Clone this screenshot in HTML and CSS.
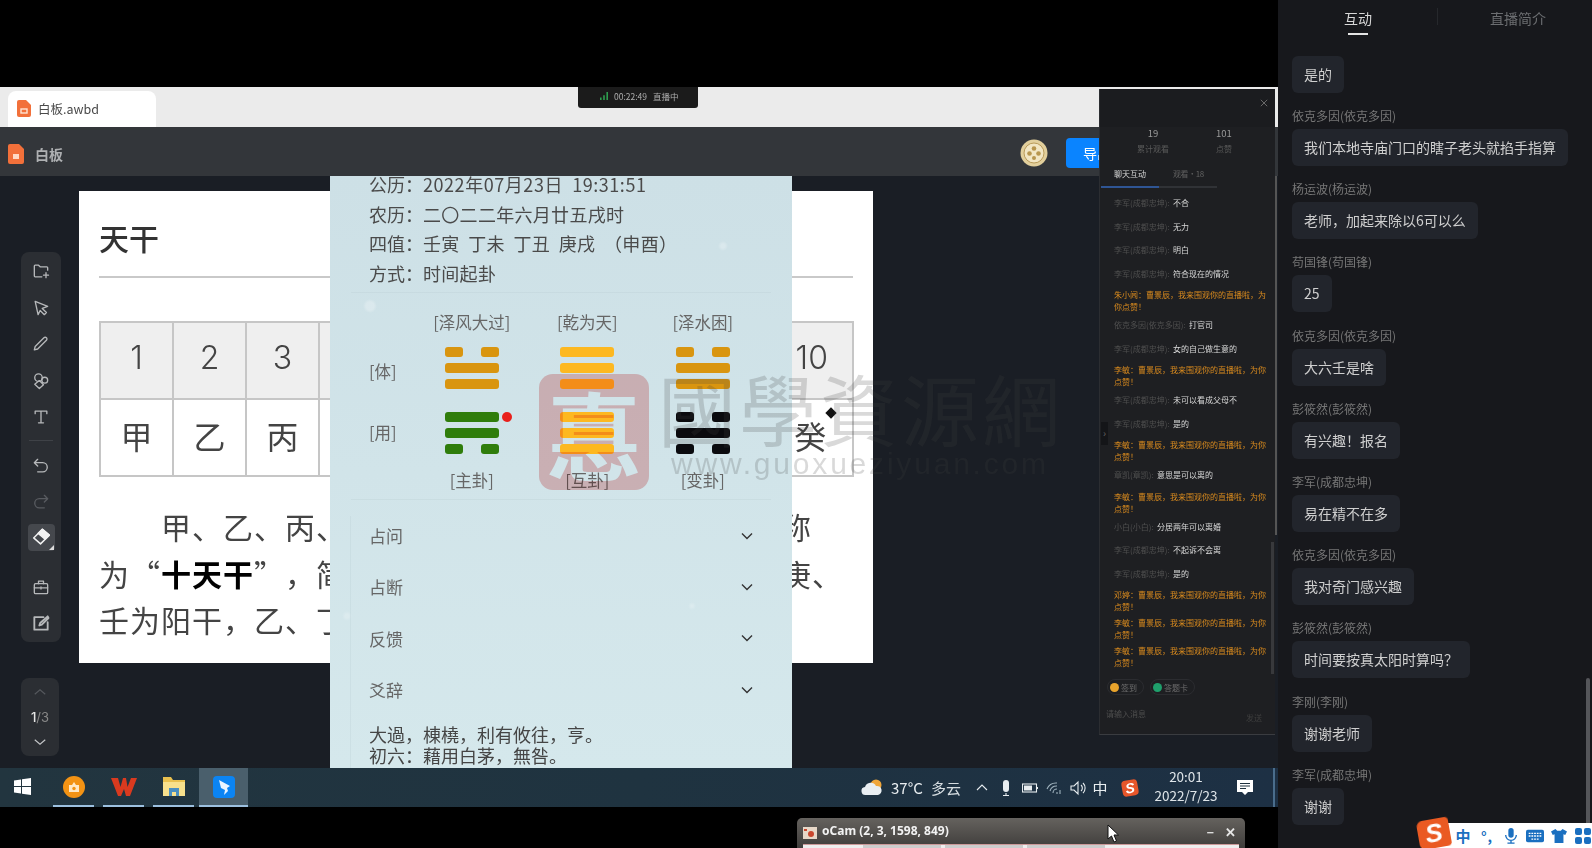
FILE: index.html
```html
<!DOCTYPE html>
<html lang="zh-CN">
<head>
<meta charset="utf-8">
<title>白板.awbd</title>
<link rel="stylesheet" href="styles.css">
</head>
<body>
<div class="screen">
  <main class="stage">
    <div class="stage-top"></div>
    <div class="tabstrip">
      <div class="file-tab">
        <svg class="doc-icon" viewBox="0 0 14 17"><path fill="#f2703a" d="M2 0h7l5 5v10a2 2 0 0 1-2 2H2a2 2 0 0 1-2-2V2a2 2 0 0 1 2-2z"/><rect x="4" y="9" width="6" height="4" fill="none" stroke="#ffe3d2" stroke-width="1.4"/></svg>
        <span>白板.awbd</span>
      </div>
    </div>
    <header class="apphead">
      <svg class="doc-icon-lg" viewBox="0 0 16 20"><path fill="#f2703a" d="M2 0h9l5 5v13a2 2 0 0 1-2 2H2a2 2 0 0 1-2-2V2a2 2 0 0 1 2-2z"/><rect x="5" y="10" width="6" height="5" fill="#ffd9c4"/></svg>
      <span class="app-name">白板</span>
      <svg class="avatar" viewBox="0 0 28 28"><circle cx="14" cy="14" r="13.5" fill="#e2cf9c"/><circle cx="14" cy="14" r="10" fill="#f2e6c4" stroke="#b99b5a"/><circle cx="14" cy="9.500" r="2.300" fill="#b8964e"/><circle cx="9.500" cy="14.500" r="2.300" fill="#b8964e"/><circle cx="18.500" cy="14.500" r="2.300" fill="#b8964e"/><circle cx="14" cy="19" r="2" fill="#b8964e"/></svg>
      <button class="export">导出</button>
    </header>
    <div class="workspace">
      <aside class="rail">
        <nav class="tools">
          <svg class="tool" viewBox="0 0 24 24"><path d="M20 11V8a1 1 0 0 0-1-1h-8L9 5H5a1 1 0 0 0-1 1v12a1 1 0 0 0 1 1h8M18 14v6M15 17h6"/></svg>
          <svg class="tool" viewBox="0 0 24 24"><path d="M5 4l15 6-6.500 2.500 5 5-2.500 2.500-5-5L8.500 20z"/></svg>
          <svg class="tool" viewBox="0 0 24 24"><path d="M15.500 4.500a2.100 2.100 0 0 1 3 3L8 18l-4 1 1-4z"/></svg>
          <svg class="tool" viewBox="0 0 24 24"><circle cx="9" cy="8" r="4.500"/><circle cx="16.500" cy="11" r="3.500"/><path d="M10 11.500l5 5-5 4.500-5.500-5z"/></svg>
          <svg class="tool" viewBox="0 0 24 24"><path d="M5 8V5h14v3M12 5v14M9 19h6"/></svg>
          <hr class="tool-sep">
          <svg class="tool" viewBox="0 0 24 24"><path d="M8 4L4 8l4 4M4 8h10a5.500 5.500 0 0 1 0 11H8"/></svg>
          <svg class="tool dim" viewBox="0 0 24 24"><path d="M16 4l4 4-4 4M20 8H10a5.500 5.500 0 0 0 0 11h6"/></svg>
          <div class="tool-active">
            <svg class="tool bright" viewBox="0 0 24 24"><path d="M13.500 3.500l7.500 6.500-9.500 9.500-7.500-6.500z"/><path class="filled" d="M13.500 3.500l7.500 6.500-4.500 4.500-7.500-6.500z"/></svg>
          </div>
          <hr class="tool-sep blank">
          <svg class="tool" viewBox="0 0 24 24"><rect x="4" y="8" width="16" height="12" rx="1.500"/><path d="M9 8V5h6v3M4 13h16M12 12v2.500"/></svg>
          <svg class="tool thick" viewBox="0 0 24 24"><path d="M20 11v9H4V5h11M10 15l1-3 9-8 1 2-8 8z"/></svg>
        </nav>
        <nav class="pager">
          <svg class="pager-arrow dim" viewBox="0 0 24 24"><path d="M5 15l7-6 7 6"/></svg>
          <span class="pager-num"><b>1</b>/3</span>
          <svg class="pager-arrow" viewBox="0 0 24 24"><path d="M5 9l7 6 7-6"/></svg>
        </nav>
      </aside>
      <article class="sheet">
        <h1 class="sheet-title">天干</h1>
        <table class="stems">
          <tr class="stems-head"><td>1</td><td>2</td><td>3</td><td>4</td><td>5</td><td>6</td><td>7</td><td>8</td><td>9</td><td>10</td></tr>
          <tr><td>甲</td><td>乙</td><td>丙</td><td>丁</td><td>戊</td><td>己</td><td>庚</td><td>辛</td><td>壬</td><td>癸</td></tr>
        </table>
        <i class="pointer-dot"></i>
        <div class="sheet-body">
          <p class="first">甲、乙、丙、丁、戊、己、庚、辛、壬、癸，称</p>
          <p>为“<b>十天干</b>”，简称为“天干”。而甲、丙、戊、庚、</p>
          <p>壬为阳干，乙、丁、己、辛、癸为阴干。</p>
        </div>
      </article>
    </div>
    <footer class="taskbar">
      <div class="start"><svg class="win" viewBox="0 0 17 17"><path fill="#fff" d="M0 2.500l7-1v6.500H0zM8 1.300L17 0v8H8zM0 9h7v6.500l-7-1zM8 9h9v8l-9-1.300z"/></svg></div>
      <div class="task-btn">
        <svg class="app-ic" viewBox="0 0 22 22"><circle cx="11" cy="11" r="11" fill="#f39314"/><path fill="#ffe9c6" d="M6 9h10v7H6z"/><circle cx="11" cy="12.500" r="1.700" fill="#f39314"/><path d="M9 9l2-3 2 3" fill="#ffe9c6"/></svg>
      </div>
      <div class="task-btn">
        <svg class="app-ic wps" viewBox="0 0 26 20"><path fill="#d93a1f" d="M0 1h7l2.500 9L12 1h3l1.500 9L20 1h6l-7 18h-4l-2-7-3 7H7z"/></svg>
      </div>
      <div class="task-btn">
        <svg class="app-ic wide" viewBox="0 0 24 20"><path fill="#e9c14f" d="M1 0h8l2 3h12v16H1z"/><path fill="#f7e08c" d="M1 5h22v14H1z"/><path fill="#4a8fc0" d="M7 11h10v8h-3v-4h-4v4H7z"/></svg>
      </div>
      <div class="task-btn active">
        <svg class="app-ic" viewBox="0 0 22 22"><rect width="22" height="22" rx="4" fill="#0b84f3"/><path fill="#e9f4ff" d="M6 4l11 6-3 2 1 3-4 4 1-5-4-2z"/></svg>
      </div>
      <div class="tray">
        <svg class="tray-cloud" viewBox="0 0 22 17"><circle cx="15" cy="6" r="5.500" fill="#f0a63a"/><path fill="#e9eef2" d="M5 16a4 4 0 0 1-1-8 6 6 0 0 1 11-1 4.500 4.500 0 0 1 2 9z"/></svg>
        <span class="temp">37°C</span>
        <span class="sky">多云</span>
        <span class="ti"><svg viewBox="0 0 16 16"><path d="M3 10l5-5 5 5"/></svg></span>
        <span class="ti"><svg viewBox="0 0 16 16"><rect class="solid" x="5" y="0" width="6" height="12" rx="3"/><path d="M8 13v2M5 15.500h6"/></svg></span>
        <span class="ti"><svg viewBox="0 0 16 16"><rect x="0.500" y="4" width="14" height="8"/><rect class="solid" x="2" y="5.500" width="8" height="5"/><path d="M15.500 7v2"/></svg></span>
        <span class="ti"><svg viewBox="0 0 16 16"><path class="faint" d="M1 9a10 10 0 0 1 10-6M4 11a7 7 0 0 1 7-5M7 13a4 4 0 0 1 4-4M11 12v2M14 10v4"/></svg></span>
        <span class="ti"><svg viewBox="0 0 16 16"><path d="M1 6h3l4-4v12l-4-4H1zM11 5a4 4 0 0 1 0 6M13 3a7 7 0 0 1 0 10"/></svg></span>
        <span class="tray-zh">中</span>
        <span class="tray-sogou">S</span>
        <div class="clock"><span>20:01</span><span>2022/7/23</span></div>
        <svg class="notice" viewBox="0 0 18 18"><path fill="#fff" d="M1 1h16v12h-5l-3 3-3-3H1z"/><path stroke="#20323f" stroke-width="1.200" d="M4 4.500h10M4 7h10M4 9.500h6"/></svg>
        <i class="tray-end"></i>
      </div>
    </footer>
    <div class="stage-bottom"></div>

    <section class="phone">
      <div class="info">
        <p class="date"><span>公历：</span>2022年07月23日&nbsp; 19:31:51</p>
        <p><span>农历：</span>二〇二二年六月廿五戌时</p>
        <p><span>四值：</span>壬寅&nbsp; 丁未&nbsp; 丁丑&nbsp; 庚戌&nbsp; （申酉）</p>
        <p><span>方式：</span>时间起卦</p>
      </div>
      <div class="gua">
        <span></span>
        <span class="gua-name">[泽风大过]</span>
        <span class="gua-name">[乾为天]</span>
        <span class="gua-name">[泽水困]</span>

        <span class="gua-side ti-body">[体]</span>
        <div class="hex amber"><div class="yao broken"><i></i><i></i></div><div class="yao"></div><div class="yao"></div></div>
        <div class="hex gold"><div class="yao"></div><div class="yao"></div><div class="yao"></div></div>
        <div class="hex amber"><div class="yao broken"><i></i><i></i></div><div class="yao"></div><div class="yao"></div></div>

        <span class="gua-side ti-use">[用]</span>
        <div class="hex green"><div class="yao"></div><div class="yao"></div><div class="yao broken"><i></i><i></i></div><i class="moving"></i></div>
        <div class="hex gold"><div class="yao"></div><div class="yao"></div><div class="yao"></div></div>
        <div class="hex black"><div class="yao broken"><i></i><i></i></div><div class="yao"></div><div class="yao broken"><i></i><i></i></div></div>

        <span></span>
        <span class="gua-name low">[主卦]</span>
        <span class="gua-name low">[互卦]</span>
        <span class="gua-name low">[变卦]</span>
      </div>
      <div class="fold">
        <div class="fold-row"><span>占问</span><svg viewBox="0 0 12 12"><path d="M1 3.500l5 5 5-5"/></svg></div>
        <div class="fold-row"><span>占断</span><svg viewBox="0 0 12 12"><path d="M1 3.500l5 5 5-5"/></svg></div>
        <div class="fold-row"><span>反馈</span><svg viewBox="0 0 12 12"><path d="M1 3.500l5 5 5-5"/></svg></div>
        <div class="fold-row"><span>爻辞</span><svg viewBox="0 0 12 12"><path d="M1 3.500l5 5 5-5"/></svg></div>
      </div>
      <div class="yao-text">
        <p>大過，棟橈，利有攸往，亨。</p>
        <p>初六：藉用白茅，無咎。</p>
      </div>
    </section>

    <div class="stamp"><span class="stamp-char">惪</span></div>
    <div class="mark-title">國學資源網</div>
    <div class="mark-url">www.guoxueziyuan.com</div>

    <div class="live-badge">
      <svg viewBox="0 0 10 10"><path fill="#2e9e4f" d="M0 7h2v3H0zM4 4h2v6H4zM8 0h2v10H8z"/></svg>
      <span>00:22:49</span><span>直播中</span>
    </div>

    <section class="chat">
      <div class="chat-top"><svg viewBox="0 0 10 10"><path d="M1 1l8 8M9 1l-8 8"/></svg></div>
      <div class="chat-stats">
        <div><b>19</b><span>累计观看</span></div>
        <div><b>101</b><span>点赞</span></div>
      </div>
      <div class="chat-tabs"><span class="on">聊天互动</span><span class="tab-count">观看·18</span></div>
      <div class="chat-track"><i></i></div>
      <ul class="chat-list">
        <li><span class="who">李军(成都忠坤):</span> 不合</li>
        <li><span class="who">李军(成都忠坤):</span> 无力</li>
        <li><span class="who">李军(成都忠坤):</span> 明白</li>
        <li><span class="who">李军(成都忠坤):</span> 符合现在的情况</li>
        <li class="gift">朱小闻：曹景辰，我来围观你的直播啦，为你点赞！</li>
        <li><span class="who">依克多因(依克多因):</span> 打官司</li>
        <li><span class="who">李军(成都忠坤):</span> 女的自己做生意的</li>
        <li class="gift">李敏：曹景辰，我来围观你的直播啦，为你点赞！</li>
        <li><span class="who">李军(成都忠坤):</span> 未可以看成父母不</li>
        <li><span class="who">李军(成都忠坤):</span> 是的</li>
        <li class="gift">李敏：曹景辰，我来围观你的直播啦，为你点赞！</li>
        <li><span class="who">章凯(章凯):</span> 意思是可以离的</li>
        <li class="gift">李敏：曹景辰，我来围观你的直播啦，为你点赞！</li>
        <li><span class="who">小白(小白):</span> 分居两年可以离婚</li>
        <li><span class="who">李军(成都忠坤):</span> 不起诉不会离</li>
        <li><span class="who">李军(成都忠坤):</span> 是的</li>
        <li class="gift">邓婷：曹景辰，我来围观你的直播啦，为你点赞！</li>
        <li class="gift">李敏：曹景辰，我来围观你的直播啦，为你点赞！</li>
        <li class="gift">李敏：曹景辰，我来围观你的直播啦，为你点赞！</li>
      </ul>
      <div class="chat-pills">
        <span class="pill"><i class="coin gold-coin"></i>签到</span>
        <span class="pill"><i class="coin green-coin"></i>答题卡</span>
      </div>
      <div class="chat-input"><span>请输入消息</span><span class="send">发送</span></div>
      <i class="chat-thumb"></i>
      <i class="chat-handle">›</i>
    </section>
    <i class="stage-edge"></i>

    <section class="ocam">
      <div class="ocam-bar">
        <svg viewBox="0 0 14 12"><rect width="14" height="12" fill="#e7d8c8"/><circle cx="8" cy="7" r="3" fill="#c9472e"/><rect x="1" y="2" width="3" height="2" fill="#c9472e"/></svg>
        <span class="ocam-title">oCam (2, 3, 1598, 849)</span>
        <span class="ocam-min">–</span>
        <span class="ocam-close">✕</span>
      </div>
      <div class="ocam-body"><i></i><i></i><i></i></div>
    </section>
    <svg class="cursor" viewBox="0 0 12 19"><path fill="#fff" stroke="#111" d="M1 1v14l3.500-3 2.500 6 2.500-1-2.500-6h4.500z"/></svg>
  </main>

  <aside class="side">
    <div class="side-tabs">
      <span class="side-tab on">互动</span>
      <span class="side-tab">直播简介</span>
    </div>
    <div class="side-list">
      <div class="post"><p class="bubble">是的</p></div>
      <div class="post"><p class="name">依克多因(依克多因)</p><p class="bubble">我们本地寺庙门口的瞎子老头就掐手指算</p></div>
      <div class="post"><p class="name">杨运波(杨运波)</p><p class="bubble">老师，加起来除以6可以么</p></div>
      <div class="post"><p class="name">苟国锋(苟国锋)</p><p class="bubble">25</p></div>
      <div class="post"><p class="name">依克多因(依克多因)</p><p class="bubble">大六壬是啥</p></div>
      <div class="post"><p class="name">彭筱然(彭筱然)</p><p class="bubble">有兴趣！报名</p></div>
      <div class="post"><p class="name">李军(成都忠坤)</p><p class="bubble">易在精不在多</p></div>
      <div class="post"><p class="name">依克多因(依克多因)</p><p class="bubble">我对奇门感兴趣</p></div>
      <div class="post"><p class="name">彭筱然(彭筱然)</p><p class="bubble">时间要按真太阳时算吗？</p></div>
      <div class="post"><p class="name">李刚(李刚)</p><p class="bubble">谢谢老师</p></div>
      <div class="post"><p class="name">李军(成都忠坤)</p><p class="bubble">谢谢</p></div>
    </div>
    <i class="side-thumb"></i>
    <div class="ime">
      <span class="ime-logo">S</span>
      <span class="ime-zh">中</span>
      <span class="ime-punct">°,</span>
      <svg viewBox="0 0 16 18"><rect class="b" x="5" y="0" width="6" height="11" rx="3"/><path d="M2 8a6 6 0 0 0 12 0M8 14v3M4 17h8"/></svg>
      <svg class="ime-wide" viewBox="0 0 20 16"><rect class="b" x="0" y="1" width="20" height="14" rx="2"/><path class="w" d="M3 5h14M3 8h14M6 11.500h8"/></svg>
      <svg viewBox="0 0 18 16"><path class="b" d="M5 0L0 3l2 4 2-1v10h10V6l2 1 2-4-5-3-2 2H7z"/></svg>
      <svg viewBox="0 0 16 16"><rect class="b" width="7" height="7" rx="2"/><rect class="b" x="9" width="7" height="7" rx="2"/><rect class="b" y="9" width="7" height="7" rx="2"/><rect class="b" x="9" y="9" width="7" height="7" rx="2"/></svg>
    </div>
  </aside>
</div>
</body>
</html>
```

FILE: styles.css
```css
* { box-sizing: border-box; }
html, body { margin: 0; padding: 0; height: 100%; background: #000; }
body { font-family: "Noto Sans CJK SC", "Noto Sans", sans-serif; overflow: hidden; text-spacing-trim: space-all; }
p, h1, ul { margin: 0; padding: 0; }
ul { list-style: none; }
i { font-style: normal; }

.screen { display: grid; grid-template-columns: 1278px 314px; width: 1592px; height: 848px; overflow: hidden; }
.stage { position: relative; display: flex; flex-direction: column; height: 848px; overflow: hidden; background: #000; }
.stage-top { height: 87px; flex: none; }
.stage-bottom { height: 41px; flex: none; }

/* browser tab strip */
.tabstrip { height: 40px; flex: none; background: #ebebeb; padding: 4px 0 0 8px; }
.file-tab { display: flex; align-items: center; gap: 7px; width: 148px; height: 36px; padding: 0 0 2px 9px; background: #fff; border-radius: 8px 8px 0 0; font-size: 12.500px; color: #4a4a4a; }
.doc-icon { width: 14px; height: 17px; }

/* app header */
.apphead { height: 49px; flex: none; display: flex; align-items: center; background: #33363a; padding: 4px 0 0 8px; }
.doc-icon-lg { width: 16px; height: 20px; }
.app-name { margin-left: 11px; font-size: 14px; font-weight: 700; color: #aeb0b2; }
.avatar { width: 28px; height: 28px; margin-left: auto; margin-top: -2px; }
.export { width: 54px; height: 30px; margin: -2px 158px 0 18px; border: 0; border-radius: 4px; background: #0a84ff; color: #fff; font: 14px "Noto Sans CJK SC", sans-serif; text-align: left; padding: 0 0 0 17px; white-space: nowrap; overflow: hidden; }

/* workspace */
.workspace { height: 592px; flex: none; display: flex; background: #1a1e25; }
.rail { width: 79px; flex: none; padding: 76px 0 0 21px; display: flex; flex-direction: column; gap: 36px; }
.tools { width: 40px; height: 390px; background: #2b2e33; border-radius: 8px; display: flex; flex-direction: column; align-items: center; padding-top: 9px; }
.tool { width: 20px; height: 20px; margin-bottom: 16.500px; fill: none; stroke: #b6b8ba; stroke-width: 1.600; stroke-linecap: round; stroke-linejoin: round; flex: none; }
.tool.dim { stroke: #585b60; }
.tool.thick { stroke-width: 2.200; margin-bottom: 0; }
.tool.bright { stroke: #f2f2f2; margin: 0; width: 22px; height: 22px; }
.tool .filled { fill: #f2f2f2; }
.tool-sep { width: 24px; height: 1px; margin: -4px 0 15px; border: 0; background: #3f4247; flex: none; }
.tool-sep.blank { background: transparent; margin: 0 0 25px; }
.tool-active { position: relative; width: 27px; height: 27px; margin: -5px 0 0; border-radius: 4px; background: #45484d; display: flex; align-items: center; justify-content: center; flex: none; }
.tool-active::after { content: ""; position: absolute; right: 1px; bottom: 1px; border-style: solid; border-width: 0 0 5px 5px; border-color: transparent transparent #dcdcdc transparent; }
.pager { width: 38px; height: 78px; background: #2b2e33; border-radius: 8px; display: flex; flex-direction: column; align-items: center; padding-top: 5px; }
.pager-arrow { width: 18px; height: 18px; fill: none; stroke: #c4c6c8; stroke-width: 1.500; flex: none; }
.pager-arrow.dim { stroke: #55585d; }
.pager-num { font: 13px/24px "Inter", sans-serif; color: #888; height: 24px; margin: 4px 0; }
.pager-num b { color: #e6e6e6; font-weight: 500; }

/* whiteboard sheet */
.sheet { position: relative; width: 794px; height: 472px; margin-top: 15px; padding: 0 20px; background: #fff; overflow: hidden; }
.sheet-title { height: 87px; padding-top: 25px; font-size: 30px; line-height: 42px; font-weight: 500; color: #333; border-bottom: 2px solid #c9c9c9; }
.stems { margin-top: 43px; width: 753px; height: 156px; table-layout: fixed; border-collapse: collapse; }
.stems td { border: 2px solid #c6c6c6; text-align: center; font-size: 32px; line-height: 1; color: #444; padding: 0 0 6px; width: 75.300px; }
.stems td:nth-child(-n+3) { width: 73px; }
.stems td:last-child { width: 82px; padding-right: 3px; }
.stems-head td { background: #efefef; font-family: "Inter", sans-serif; font-weight: 300; height: 77px; padding-bottom: 6px; }
.stems-head td:last-child { padding-right: 0; }
.pointer-dot { position: absolute; left: 748px; top: 218px; width: 8px; height: 8px; background: #111; transform: rotate(45deg); box-shadow: 0 0 0 2px #fff; }
.sheet-body { margin-top: 26px; font-size: 30px; line-height: 46.500px; letter-spacing: 1px; color: #444; white-space: nowrap; }
.sheet-body .first { padding-left: 62px; }
.sheet-body b { color: #000; font-weight: 700; }

/* phone screenshot */
.phone { position: absolute; left: 330px; top: 176px; width: 462px; height: 592px; overflow: hidden; padding: 0 39px; color: #4a4a4a;
  background-color: #d0e3e8;
  background-image:
    radial-gradient(circle at 40px 130px, rgba(255,255,255,.25) 0, rgba(255,255,255,.25) 4px, transparent 7px),
    radial-gradient(circle at 393px 70px, rgba(255,255,255,.25) 0, rgba(255,255,255,.25) 2px, transparent 5px),
    radial-gradient(circle at 17px 440px, rgba(255,255,255,.2) 0, rgba(255,255,255,.2) 2px, transparent 5px),
    radial-gradient(circle at 240px 60px, rgba(255,255,255,.2) 0, rgba(255,255,255,.2) 1px, transparent 3px),
    radial-gradient(circle at 362px 430px, rgba(255,255,255,.2) 0, rgba(255,255,255,.2) 1px, transparent 4px),
    linear-gradient(#cde0e6, #d5e8ec);
}
.phone::before { content: ""; position: absolute; left: 20px; top: 340px; bottom: 0; width: 1px; background: rgba(190,210,215,.35); }
.info { margin: -6px -18px 0; padding: 0 0 4px 18px; border-bottom: 1px solid rgba(180,200,205,.25); }
.info p { font-size: 18px; line-height: 29.500px; white-space: nowrap; display: flex; letter-spacing: .3px; }
.info span { width: 54px; flex: none; letter-spacing: 0; }
.info .date { letter-spacing: .55px; }
.gua { display: grid; grid-template-columns: 45px repeat(3, 115.500px); grid-template-rows: 24px 54px 65px 40px; align-items: end; justify-items: center; height: 207px; margin: 0 -18px; padding: 18px 0 0 18px; border-bottom: 1px solid rgba(180,200,205,.25); color: #666; }
.gua-name { font-size: 16.500px; line-height: 24px; white-space: nowrap; margin-bottom: 1px; }
.gua-name.low { margin-bottom: 2px; }
.gua-side { font-size: 16.500px; line-height: 24px; justify-self: start; }
.ti-body { margin-bottom: 6px; }
.ti-use { margin-bottom: 10px; }
.hex { position: relative; width: 54px; display: flex; flex-direction: column; gap: 6px; }
.yao { height: 10px; border-radius: 3px; display: flex; justify-content: space-between; }
.yao i { width: 18px; height: 10px; border-radius: 3px; }
.amber .yao:not(.broken), .amber .yao i { background: #d9950f; }
.gold .yao { background: #fdb820; }
.green .yao:not(.broken), .green .yao i { background: #2f7d0b; }
.black .yao:not(.broken), .black .yao i { background: #0a0a0e; }
.moving { position: absolute; left: 57px; top: 0; width: 10px; height: 10px; border-radius: 50%; background: #e8201b; }
.fold { padding-top: 10px; }
.fold-row { height: 51.300px; display: flex; align-items: center; justify-content: space-between; font-size: 17px; color: #666; }
.fold-row svg { width: 12px; height: 12px; fill: none; stroke: #333; stroke-width: 1.400; }
.yao-text { padding-top: 9px; }
.yao-text p { font-size: 18px; line-height: 21px; white-space: nowrap; color: #454545; }

/* watermark */
.stamp { position: absolute; left: 539px; top: 374px; width: 110px; height: 116px; border-radius: 14px; background: #f5c4c4; mix-blend-mode: multiply; display: flex; align-items: center; justify-content: center; overflow: hidden; }
.stamp-char { font-size: 96px; line-height: 116px; font-weight: 700; color: #fff; }
.mark-title { position: absolute; left: 658px; top: 352px; font-family: "Noto Sans CJK TC", sans-serif; font-size: 78px; line-height: 110px; letter-spacing: 3px; color: rgba(64,64,64,.2); white-space: nowrap; }
.mark-url { position: absolute; left: 671px; top: 444px; font: 30px/40px "Liberation Sans", sans-serif; letter-spacing: 2.800px; color: rgba(64,64,64,.2); white-space: nowrap; }

/* live badge */
.live-badge { position: absolute; left: 578px; top: 87px; width: 120px; height: 21px; padding: 0 0 3px 22px; display: flex; align-items: center; gap: 6px; background: #1b1b1b; border-radius: 0 0 3px 3px; font-size: 8.500px; color: #aeaeae; white-space: nowrap; }
.live-badge svg { width: 8px; height: 10px; }

/* chat float panel */
.chat { position: absolute; left: 1099px; top: 89px; width: 176px; height: 646px; background: #1e1f22; display: flex; flex-direction: column; border-left: 1px solid #2b2d31; border-bottom: 1px solid #3a3c40; }
.chat-top { height: 38px; flex: none; background: #1b1c1f; display: flex; justify-content: flex-end; align-items: center; padding: 0 7px 10px 0; }
.chat-top svg { width: 8px; height: 8px; stroke: #6e6e6e; stroke-width: 1.200; fill: none; }
.chat-stats { height: 34px; flex: none; display: grid; grid-template-columns: 106px 36px; text-align: center; }
.chat-stats div { display: flex; flex-direction: column; }
.chat-stats b { font-weight: 400; font-size: 9.500px; line-height: 12px; color: #9a9a9a; }
.chat-stats span { font-size: 8px; line-height: 19px; color: #5a5a5a; }
.chat-tabs { height: 25px; flex: none; display: flex; align-items: center; padding-left: 14px; font-size: 8px; color: #616161; gap: 27px; }
.chat-tabs .on { color: #d9d9d9; }
.tab-count { letter-spacing: -.4px; }
.chat-track { height: 2px; flex: none; margin-left: 1px; width: 116px; background: #303236; }
.chat-track i { display: block; width: 58px; height: 2px; background: #2f5594; }
.chat-list { flex: none; padding: 3px 8px 0 14px; height: 486px; font-size: 8px; color: #d9d9d9; word-spacing: 1.500px; }
.chat-list li { line-height: 23.500px; white-space: nowrap; }
.chat-list .who { color: #4f4f4f; word-spacing: 0; }
.chat-list .gift { line-height: 12px; padding-top: 4px; color: #d88a1e; white-space: normal; }
.chat-pills { height: 26px; flex: none; display: flex; gap: 6px; padding: 5px 0 0 7px; }
.pill { display: flex; align-items: center; gap: 2px; height: 16px; padding: 0 6px 0 2px; border: 1px solid #2b2c30; border-radius: 8px; font-size: 8px; color: #6d6d6d; white-space: nowrap; }
.coin { width: 9px; height: 9px; border-radius: 50%; }
.gold-coin { background: #e9a42c; }
.green-coin { background: #1fa06c; }
.chat-input { flex: 1; display: flex; justify-content: space-between; padding: 8px 13px 0 6px; font-size: 8px; color: #4e4e4e; }
.send { margin-top: 4px; color: #3f3f3f; }
.chat-thumb { position: absolute; right: 1px; top: 453px; width: 3px; height: 132px; background: #38393c; }
.chat-handle { position: absolute; left: 1px; top: 333px; width: 7px; height: 23px; background: #141518; color: #666; font-size: 10px; line-height: 21px; text-align: center; }
.stage-edge { position: absolute; left: 1275px; top: 176px; width: 2px; height: 359px; background: #555; }

/* taskbar */
.taskbar { height: 39px; flex: none; display: flex; background: linear-gradient(90deg, #22353f, #1f3340 50%, #1d3044); }
.start { width: 53px; flex: none; display: flex; padding: 10px 0 0 14px; }
.win { width: 17px; height: 17px; }
.task-btn { width: 41px; height: 39px; margin-right: 9px; flex: none; display: flex; align-items: center; justify-content: center; border-bottom: 2px solid #9cc0df; }
.task-btn.active { width: 49px; margin-left: -4px; background: #4a5f6c; }
.app-ic { width: 22px; height: 22px; }
.app-ic.wide { width: 24px; height: 20px; }
.app-ic.wps { width: 26px; height: 20px; }
.tray { position: absolute; left: 861px; top: 768px; height: 39px; display: flex; align-items: center; color: #e8edf0; white-space: nowrap; }
.tray-cloud { width: 22px; height: 17px; flex: none; }
.temp { width: 40px; margin-left: 8px; font-size: 15px; }
.sky { width: 39px; font-size: 15px; color: #d5dce0; }
.ti { width: 24px; height: 16px; display: flex; justify-content: center; flex: none; }
.ti svg { width: 16px; height: 16px; fill: none; stroke: #e8edf0; stroke-width: 1.100; }
.ti .solid { fill: #e8edf0; stroke: none; }
.ti .faint { stroke: #9fb2bd; }
.tray-zh { width: 20px; font-size: 15px; text-align: center; }
.tray-sogou { width: 16px; height: 16px; margin: 0 4px 0 12px; background: #e7562a; color: #fff; border-radius: 4px; font: italic 700 14px/16px "Liberation Sans", sans-serif; text-align: center; transform: rotate(-10deg); flex: none; }
.clock { width: 80px; margin: -4px 0 0 4px; display: flex; flex-direction: column; align-items: center; font-size: 13.500px; line-height: 19px; color: #dfe5e9; flex: none; }
.notice { width: 18px; height: 18px; margin-left: 10px; flex: none; }
.tray-end { width: 2px; height: 39px; margin-left: 19px; background: #4a6d8c; flex: none; }

/* oCam window */
.ocam { position: absolute; left: 797px; top: 818px; width: 448px; height: 30px; border-radius: 5px 5px 0 0; background: linear-gradient(#65625e, #3f3d3b); padding: 0 6px; }
.ocam-bar { height: 26px; display: flex; align-items: center; color: #fff; }
.ocam-bar svg { width: 14px; height: 12px; flex: none; margin-top: 3px; }
.ocam-title { margin-left: 5px; font: 700 12px/20px "Noto Sans", sans-serif; color: #f2f2f2; white-space: nowrap; }
.ocam-min { margin-left: auto; font-size: 14px; font-weight: 700; color: #ddd; }
.ocam-close { margin: 0 3px 0 11px; font-size: 13px; font-weight: 700; color: #e6e6e6; }
.ocam-body { display: flex; gap: 4px; height: 4px; background: #eee; border-top: 1px solid #c99; padding-left: 60px; }
.ocam-body i { width: 78px; height: 3px; background: #ccc; }
.cursor { position: absolute; left: 1107px; top: 824px; width: 12px; height: 19px; }

/* right sidebar */
.side { position: relative; height: 848px; background: #17181c; overflow: hidden; }
.side-tabs { display: grid; grid-template-columns: 160px 154px; height: 36px; }
.side-tab { position: relative; font-size: 14px; line-height: 36px; text-align: center; color: #6c6e71; }
.side-tab + .side-tab { padding-left: 6px; }
.side-tab.on { color: #d8d8d8; }
.side-tab.on::before { content: ""; position: absolute; right: 0; top: 8px; width: 1px; height: 17px; background: #26282c; }
.side-tab.on::after { content: ""; position: absolute; left: 70px; top: 33px; width: 20px; height: 2px; background: #e4e4e4; }
.side-list { padding: 20px 0 0 14px; }
.post { height: 73.200px; }
.post:first-child { height: 51px; }
.name { height: 22px; font-size: 12px; line-height: 18px; color: #767676; white-space: nowrap; }
.bubble { display: table; height: 37px; padding: 0 12px; border-radius: 6px; background: #22252c; font-size: 14px; line-height: 37px; color: #cfcfcf; white-space: nowrap; }
.side-thumb { position: absolute; right: 2px; top: 678px; width: 4px; height: 170px; border-radius: 2px; background: #55565a; }
.ime { position: absolute; left: 144px; top: 823px; width: 170px; height: 25px; padding-left: 29px; display: flex; align-items: center; background: #fff; color: #1a6fc0; }
.ime > span:not(.ime-logo) { width: 24px; text-align: center; flex: none; }
.ime svg { width: 16px; height: 16px; flex: none; margin: 0 4px; }
.ime svg.ime-wide { width: 18px; margin: 0 3px; }
.ime .b { fill: #1a6fc0; }
.ime path:not(.b):not(.w) { fill: none; stroke: #1a6fc0; stroke-width: 1.500; }
.ime .w { fill: none; stroke: #fff; stroke-width: 1.500; stroke-dasharray: 2 1; }
.ime-logo { position: absolute; left: -4px; top: -4px; width: 32px; height: 29px; background: #ea5a22; border-radius: 6px 4px 4px 6px; color: #fff; font: italic 900 26px/29px "Liberation Sans", sans-serif; text-align: center; transform: rotate(-10deg); }
.ime-zh { font-size: 15px; font-weight: 700; }
.ime-punct { font-size: 14px; font-weight: 700; letter-spacing: 1px; }
```
